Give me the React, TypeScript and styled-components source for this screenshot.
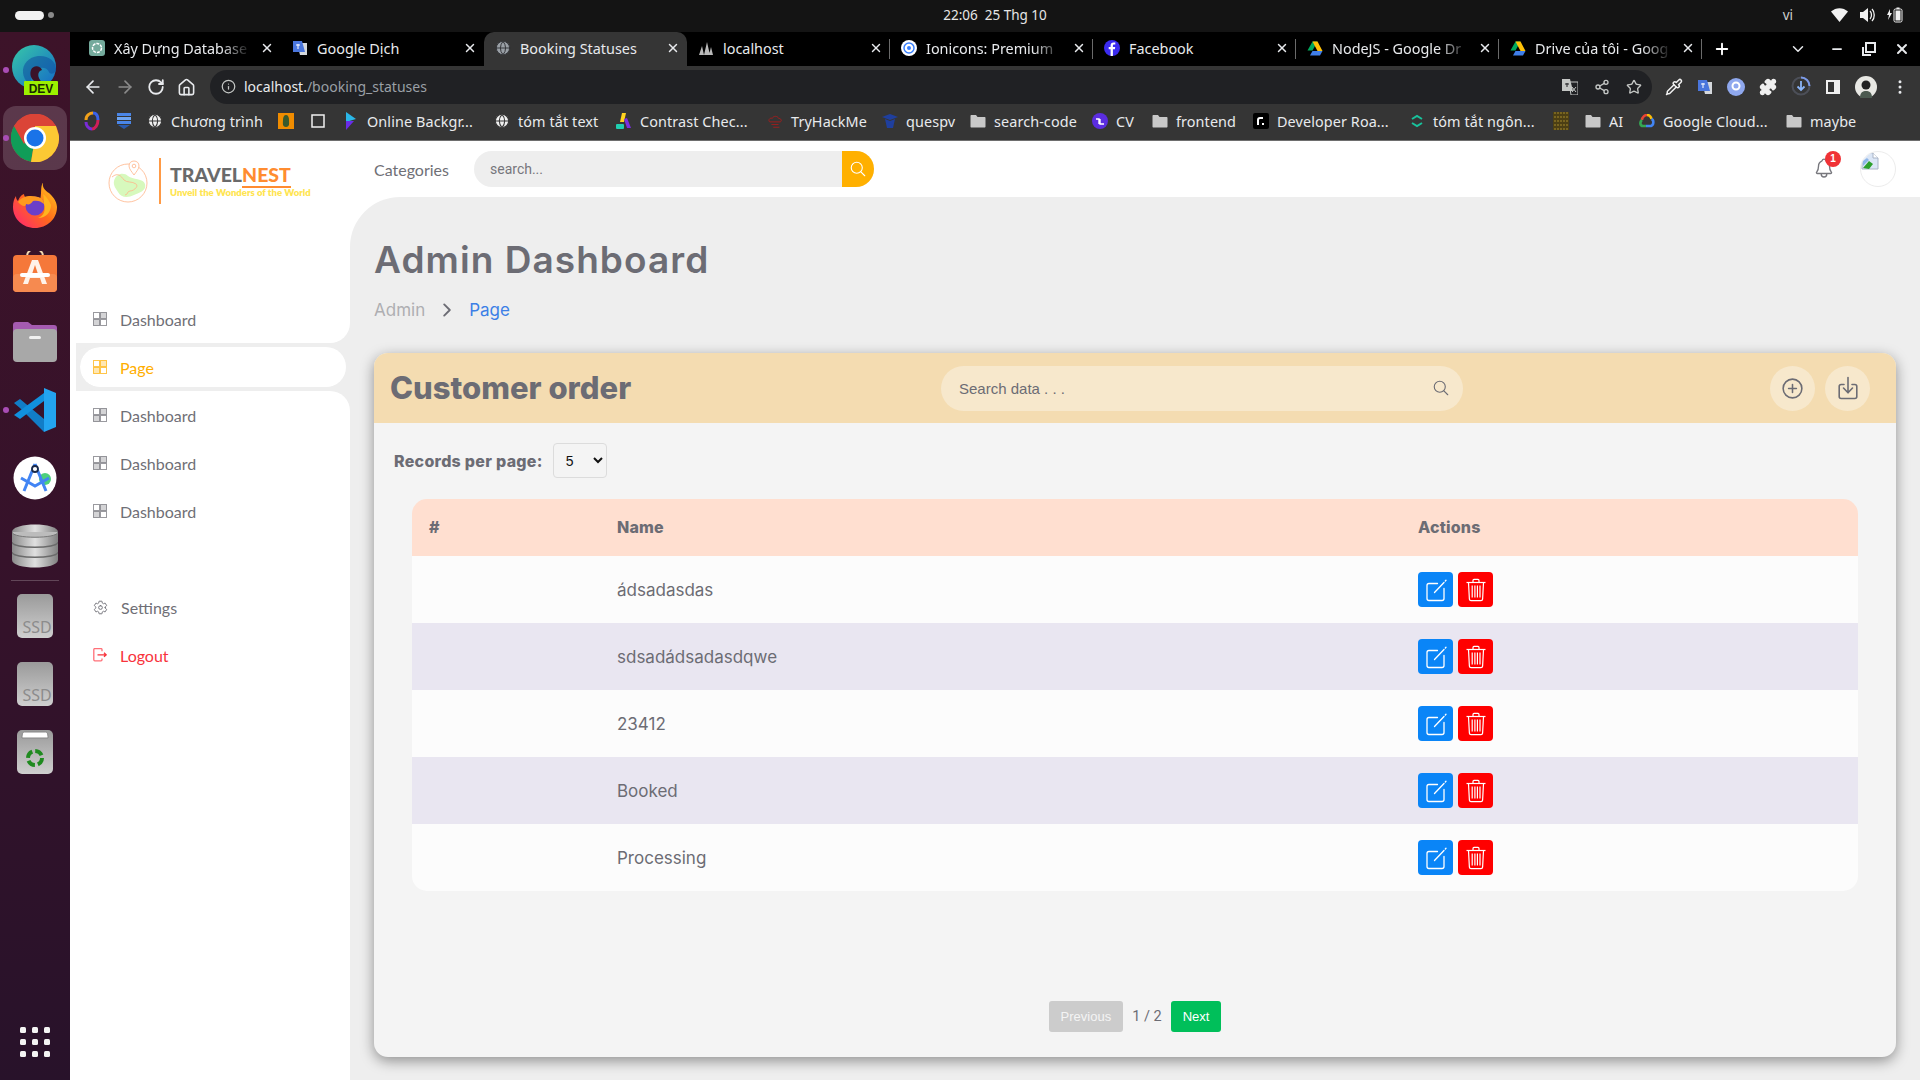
import React from "react";
import styled, { createGlobalStyle } from "styled-components";
import {
  ArrowLeft,
  ArrowRight,
  RotateCw,
  Home,
  Info,
  Share2,
  Star,
  Puzzle,
  Pipette,
  MoreVertical,
  X,
  Plus,
  ChevronDown,
  Minus,
  Globe,
} from "lucide-react";
import {
  IoAddCircleOutline,
  IoNotificationsOutline,
  IoSearchOutline,
  IoSettingsOutline,
  IoChevronForwardOutline,
} from "react-icons/io5";

const GlobalStyle = createGlobalStyle`
  html, body {
    margin: 0;
    padding: 0;
    height: 100%;
    overflow: hidden;
    background: #eeeeee;
  }
  * {
    box-sizing: border-box;
  }
`;

const Screen = styled.div`
  width: 1920px;
  height: 1080px;
  display: flex;
  flex-direction: column;
  overflow: hidden;
`;

/* ---------- ubuntu top bar ---------- */

const TopBar = styled.div`
  height: 32px;
  flex: none;
  background: #141414;
  color: #e6e6e6;
  display: grid;
  grid-template-columns: 1fr auto 1fr;
  align-items: center;
  padding: 0 15px 2px;
  font-family: "Noto Sans", sans-serif;
  font-size: 13.5px;
`;

const Workspaces = styled.div`
  display: flex;
  align-items: center;
  gap: 4px;
`;

const WorkspacePill = styled.span`
  width: 29px;
  height: 9px;
  border-radius: 5px;
  background: #f2f2f2;
`;

const WorkspaceDot = styled.span`
  width: 6px;
  height: 6px;
  border-radius: 50%;
  background: #8a8a8a;
`;

const Clock = styled.div`
  padding-left: 70px;
  white-space: pre;
`;

const Tray = styled.div`
  display: flex;
  align-items: center;
  justify-content: flex-end;
  gap: 12px;
  padding-right: 2px;
`;

const TrayLang = styled.span`
  margin-right: 26px;
  color: #cfcfcf;
`;

const Desktop = styled.div`
  flex: 1;
  display: flex;
  min-height: 0;
`;

/* ---------- dock ---------- */

const Dock = styled.div`
  width: 70px;
  flex: none;
  background: linear-gradient(180deg, #3d1329 0%, #36122a 50%, #28122a 100%);
  display: flex;
  flex-direction: column;
  padding-top: 4px;
`;

const DockSlot = styled.div<{ $active?: boolean; $running?: boolean }>`
  position: relative;
  height: 68px;
  flex: none;
  display: flex;
  align-items: center;
  justify-content: center;

  ${(p) =>
    p.$active &&
    `
    &::before {
      content: "";
      position: absolute;
      inset: 2px 3px;
      border-radius: 13px;
      background: rgba(255, 255, 255, 0.16);
    }
  `}

  ${(p) =>
    p.$running &&
    `
    &::after {
      content: "";
      position: absolute;
      left: 3px;
      top: 31px;
      width: 6px;
      height: 6px;
      border-radius: 50%;
      background: #a94db5;
    }
  `}

  svg {
    position: relative;
  }
`;

const DockRule = styled.div`
  height: 1px;
  margin: 0 11px 1px;
  background: rgba(255, 255, 255, 0.22);
`;

const DockApps = styled.div`
  display: grid;
  grid-template-columns: repeat(3, 6px);
  gap: 6px;
  justify-content: center;
  margin-top: auto;
  padding-bottom: 23px;

  span {
    width: 6px;
    height: 6px;
    border-radius: 1.5px;
    background: #f4f4f4;
  }
`;

/* ---------- chrome ---------- */

const Browser = styled.div`
  flex: 1;
  min-width: 0;
  display: flex;
  flex-direction: column;
`;

const TabStrip = styled.div`
  height: 34px;
  flex: none;
  background: #000;
  display: flex;
  align-items: stretch;
  padding-left: 8px;
  color: #e8eaed;
  font-family: "Noto Sans", sans-serif;
  font-size: 14.4px;
`;

const Tab = styled.div<{ $active?: boolean; $divider?: boolean }>`
  position: relative;
  width: 203px;
  flex: none;
  display: flex;
  align-items: center;
  gap: 9px;
  padding: 0 7px 2px 11px;
  border-radius: 10px 10px 0 0;
  background: ${(p) => (p.$active ? "#353535" : "transparent")};

  ${(p) =>
    p.$divider &&
    `
    &::after {
      content: "";
      position: absolute;
      right: 0;
      top: 7px;
      bottom: 7px;
      width: 1px;
      background: #6a6a6a;
    }
  `}

  svg {
    flex: none;
  }
`;

const TabTitle = styled.span<{ $fade?: boolean }>`
  flex: 1;
  min-width: 0;
  white-space: nowrap;
  ${(p) =>
    p.$fade &&
    `
    mask-image: linear-gradient(90deg, #000 78%, transparent 100%);
  `}
`;

const TabPlus = styled.div`
  width: 40px;
  display: flex;
  align-items: center;
  justify-content: center;
`;

const WindowControls = styled.div`
  margin-left: auto;
  display: flex;
  align-items: center;
  gap: 18px;
  padding-right: 10px;
`;

const TabListChevron = styled(ChevronDown)`
  margin-right: 5px;
`;

const Toolbar = styled.div`
  height: 38px;
  flex: none;
  background: #353535;
  display: flex;
  align-items: flex-end;
  color: #e8eaed;
`;

const NavButtons = styled.div`
  width: 140px;
  height: 34px;
  flex: none;
  display: flex;
  align-items: center;
  padding-left: 13px;
  gap: 12px;
`;

const Omnibox = styled.div`
  width: 1442px;
  height: 34px;
  flex: none;
  border-radius: 17px;
  background: #202124;
  display: flex;
  align-items: center;
  padding: 0 10px 1px 11px;
  font-family: "Noto Sans", sans-serif;
  font-size: 14px;
`;

const UrlHost = styled.span`
  margin-left: 8px;
  color: #e8eaed;
`;

const UrlPath = styled.span`
  color: #9aa0a6;
`;

const OmniIcons = styled.div`
  margin-left: auto;
  display: flex;
  align-items: center;
  gap: 16px;
`;

const ExtIcons = styled.div`
  height: 34px;
  display: flex;
  align-items: center;
  gap: 14px;
  padding-left: 13px;
`;

const BookmarkBar = styled.div`
  height: 37px;
  flex: none;
  background: #353535;
  border-bottom: 1px solid #6e6e6e;
  display: flex;
  align-items: center;
  padding: 0 0 2px 14px;
  color: #e8eaed;
  font-family: "Noto Sans", sans-serif;
  font-size: 14.4px;
  letter-spacing: 0.1px;
`;

const Bookmark = styled.div<{ $w: number }>`
  width: ${(p) => p.$w}px;
  flex: none;
  display: flex;
  align-items: center;
  gap: 8px;
  white-space: nowrap;

  svg {
    flex: none;
    min-width: 16px;
  }
`;

/* ---------- page ---------- */

const Page = styled.div`
  flex: 1;
  min-height: 0;
  display: flex;
`;

const Sidebar = styled.aside`
  width: 280px;
  flex: none;
  background: #eeeeee;
  display: flex;
  flex-direction: column;
  font-family: "Lato", sans-serif;
  font-size: 16px;
  color: #6f6f76;
`;

const SideTop = styled.div`
  height: 202px;
  flex: none;
  background: #fff;
  border-bottom-right-radius: 20px;
  display: flex;
  flex-direction: column;
  justify-content: space-between;
`;

const Logo = styled.div`
  display: flex;
  align-items: center;
  padding: 17px 0 0 38px;
`;

const LogoRule = styled.span`
  width: 2px;
  height: 46px;
  margin: 0 9px;
  background: #ff9a45;
`;

const LogoText = styled.div`
  display: flex;
  flex-direction: column;
  gap: 1px;
`;

const LogoName = styled.div`
  font-family: "Lato", sans-serif;
  font-size: 19.5px;
  line-height: 22px;
  font-weight: 900;
  color: #6a6a6a;

  span {
    color: #ff8c30;
    border-bottom: 2px solid #ff8c30;
  }
`;

const LogoTag = styled.div`
  font-family: "Lato", sans-serif;
  font-size: 9.5px;
  line-height: 12px;
  font-weight: 800;
  color: #ffe552;
  white-space: nowrap;
`;

const NavItem = styled.div<{ $tone?: "default" | "danger" }>`
  height: 48px;
  display: flex;
  align-items: center;
  gap: 13px;
  padding-left: 23px;
  color: ${(p) => (p.$tone === "danger" ? "#f8333c" : "inherit")};
`;

const ActiveRow = styled.div`
  height: 48px;
  flex: none;
  padding: 4px 4px 4px 10px;
  background: linear-gradient(90deg, #fff 6px, #eeeeee 6px);
`;

const ActivePill = styled.div`
  position: relative;
  height: 40px;
  display: flex;
  align-items: center;
  gap: 13px;
  padding-left: 13px;
  background: #fff;
  border-radius: 20px;
  color: #ffae00;

  &::before {
    content: "";
    position: absolute;
    inset: -4px 0 -4px -4px;
    z-index: 0;
    border: 4px solid #eeeeee;
    border-right: 0;
    border-radius: 24px 0 0 24px;
  }
`;

const SideBottom = styled.div`
  flex: 1;
  background: #fff;
  border-top-right-radius: 20px;
  display: flex;
  flex-direction: column;
`;

const NavGap = styled.div`
  height: 48px;
  flex: none;
`;

const Main = styled.div`
  flex: 1;
  min-width: 0;
  background: #fff;
  display: flex;
  flex-direction: column;
`;

const TopNav = styled.nav`
  height: 56px;
  flex: none;
  display: flex;
  align-items: flex-start;
  padding: 10px 24px 0;
`;

const Categories = styled.span`
  width: 100px;
  flex: none;
  line-height: 37px;
  font-family: "Lato", sans-serif;
  font-size: 16px;
  color: #6f6f76;
`;

const TopSearch = styled.div`
  width: 400px;
  height: 36px;
  flex: none;
  display: flex;
  border-radius: 18px;
  overflow: hidden;
  background: #eeeeee;
`;

const TopSearchText = styled.span`
  flex: 1;
  padding-left: 16px;
  line-height: 37px;
  font-family: "Roboto", sans-serif;
  font-size: 14px;
  color: #76767c;
`;

const TopSearchButton = styled.button`
  width: 32px;
  border: 0;
  padding: 0;
  background: #ffb000;
  color: #fff;
  display: flex;
  align-items: center;
  justify-content: center;
`;

const TopRight = styled.div`
  margin-left: auto;
  display: flex;
  align-items: flex-start;
  gap: 25px;
`;

const Bell = styled.div`
  position: relative;
  width: 22px;
  height: 26px;
  margin-top: 6px;
  color: #77777d;
`;

const BellBadge = styled.span`
  position: absolute;
  right: -6px;
  top: -6px;
  width: 16px;
  height: 16px;
  border-radius: 50%;
  background: #f03236;
  color: #fff;
  font-family: "Liberation Sans", sans-serif;
  font-size: 10px;
  font-weight: 700;
  line-height: 16px;
  text-align: center;
`;

const Avatar = styled.div`
  width: 36px;
  height: 36px;
  border-radius: 50%;
  border: 1px solid #ececec;
  overflow: hidden;
`;

const Content = styled.main`
  flex: 1;
  min-height: 0;
  background: #eeeeee;
  border-top-left-radius: 50px;
  display: flex;
  flex-direction: column;
  padding: 36px 24px 23px;
  color: #6c6c74;
  font-family: "Inter", sans-serif;
`;

const PageTitle = styled.h1`
  margin: 0;
  height: 54px;
  font-size: 37px;
  line-height: 54px;
  font-weight: 600;
  letter-spacing: 1.05px;
  color: #6c6c74;
`;

const Crumbs = styled.div`
  height: 24px;
  margin-top: 11px;
  display: flex;
  align-items: center;
  gap: 12px;
  font-size: 17px;
  color: #aeaeb2;
`;

const CrumbLink = styled.span`
  color: #3c7fe6;
`;

const Card = styled.section`
  flex: 1;
  min-height: 0;
  margin-top: 31px;
  border-radius: 14px;
  background: #f4f4f4;
  box-shadow: 0 4px 14px rgba(0, 0, 0, 0.4);
  display: flex;
  flex-direction: column;
  overflow: hidden;
`;

const CardHead = styled.header`
  height: 70px;
  flex: none;
  background: #f4dcb1;
  display: grid;
  grid-template-columns: 551px 522px 1fr;
  align-items: center;
  padding: 0 26px 0 16px;
`;

const CardTitle = styled.h2`
  margin: 0 0 2px;
  font-size: 31px;
  font-weight: 800;
  color: #6c6c74;
`;

const DataSearch = styled.div`
  height: 45px;
  border-radius: 23px;
  background: #f7e8cc;
  display: flex;
  align-items: center;
  justify-content: space-between;
  padding: 0 13px 0 18px;
  font-family: "Liberation Sans", sans-serif;
  font-size: 15px;
  color: #6c6c74;
`;

const HeadActions = styled.div`
  display: flex;
  justify-content: flex-end;
  gap: 10px;
`;

const RoundButton = styled.button`
  width: 45px;
  height: 45px;
  border: 0;
  padding: 0;
  border-radius: 50%;
  background: #f7e8cc;
  color: #6c6c74;
  display: flex;
  align-items: center;
  justify-content: center;
`;

const RecordsRow = styled.div`
  display: flex;
  align-items: center;
  gap: 10px;
  padding: 20px 0 0 20px;
  font-size: 16px;
  font-weight: 800;
  letter-spacing: 0.28px;
`;

const RecordsSelect = styled.select`
  width: 54px;
  height: 35px;
  padding-left: 8px;
  border: 1px solid #dcdcdc;
  border-radius: 4px;
  background: #f4f4f4;
  color: #111;
  font-family: "Liberation Sans", sans-serif;
  font-size: 14px;
`;

const TableWrap = styled.div`
  margin: 21px 38px 0;
  border-radius: 15px;
  overflow: hidden;
`;

const Table = styled.table`
  width: 100%;
  border-collapse: collapse;
  table-layout: fixed;
`;

const HeadCell = styled.th<{ $w?: number }>`
  height: 57px;
  padding: 0 0 2px 17px;
  background: #ffdfd0;
  text-align: left;
  font-size: 16px;
  font-weight: 800;
  letter-spacing: 0.2px;
  width: ${(p) => (p.$w ? `${p.$w}px` : "auto")};
`;

const Row = styled.tr<{ $even: boolean }>`
  background: ${(p) => (p.$even ? "#e9e6f1" : "#fcfcfc")};
`;

const Cell = styled.td`
  height: 67px;
  padding: 0 0 0 17px;
  font-size: 17px;
  font-weight: 400;
`;

const ActionCell = styled.div`
  display: flex;
  gap: 5px;
`;

const ActionButton = styled.button<{ $kind: "edit" | "delete" }>`
  width: 35px;
  height: 35px;
  border: 0;
  padding: 0;
  border-radius: 4px;
  background: ${(p) => (p.$kind === "edit" ? "#0a85f7" : "#ff0000")};
  color: #fff;
  display: flex;
  align-items: center;
  justify-content: center;
`;

const Pager = styled.div`
  margin-top: auto;
  height: 56px;
  flex: none;
  display: flex;
  justify-content: center;
  gap: 9px;
  font-family: "Roboto", sans-serif;
  font-size: 15px;
`;

const PagerButton = styled.button<{ $enabled?: boolean }>`
  height: 31px;
  border: 0;
  border-radius: 3px;
  padding: 0 12px;
  background: ${(p) => (p.$enabled ? "#00bf5a" : "#cccccc")};
  color: ${(p) => (p.$enabled ? "#fff" : "#f4f4f4")};
  font-family: "Liberation Sans", sans-serif;
  font-size: 13px;
`;

const PagerCount = styled.span`
  line-height: 31px;
  font-size: 14.5px;
`;

/* ---------- drawn icons ---------- */

const SideGrid = () => (
  <svg width="14" height="14" viewBox="0 0 14 14" fill="none" stroke="currentColor" strokeOpacity="0.7">
    <rect x="0.5" y="0.5" width="6" height="6" />
    <rect x="7.5" y="0.5" width="6" height="6" fill="currentColor" fillOpacity="0.3" />
    <rect x="0.5" y="7.5" width="6" height="6" fill="currentColor" fillOpacity="0.3" />
    <rect x="7.5" y="7.5" width="6" height="6" />
  </svg>
);

const LogoutIcon = () => (
  <svg width="14" height="14" viewBox="0 0 14 14" fill="none" stroke="#ff7078" strokeWidth="1.300">
    <path d="M9 3.200V1.600C9 1 8.600.6 8 .6H1.800C1.200.6.8 1 .8 1.600v10.200c0 .6.4 1 1 1H8c.6 0 1-.4 1-1v-1.400" />
    <path d="M4.500 6.800h8.600M11 4.800l2.200 2-2.200 2" stroke="#f8333c" />
  </svg>
);

const EditIcon = () => (
  <svg width="24" height="24" viewBox="0 1 24 24" fill="none" stroke="#fff" strokeWidth="1.300" strokeLinecap="round">
    <path d="M13.500 6.500H5c-1.200 0-2 .8-2 2v13c0 1.200.8 2 2 2h13c1.200 0 2-.8 2-2v-10" />
    <path d="M10.500 15.500L20 5.500" />
    <path d="M21.300 4l.7-.8" />
  </svg>
);

const TrashIcon = () => (
  <svg width="22" height="24" viewBox="0 0 22 24" fill="none" stroke="#fff" strokeWidth="1.200">
    <path d="M1.500 4.500h19" />
    <path d="M8 4.300V2.400c0-.6.4-1 1-1h4c.6 0 1 .4 1 1v1.900" />
    <path d="M3.500 4.700l.9 16.400c.1 1 .7 1.600 1.600 1.600h10c.9 0 1.500-.6 1.600-1.600l.9-16.400" />
    <path d="M7.200 7.500v12M9.900 7.500v12M12.400 7.500v12M15 7.500v12" />
  </svg>
);

const SaveInIcon = () => (
  <svg width="20" height="24" viewBox="0 0 20 24" fill="none" stroke="#6c6c74" strokeWidth="1.600" strokeLinecap="round" strokeLinejoin="round">
    <path d="M6 8.500H3.200C2 8.500 1.200 9.300 1.200 10.500v10c0 1.200.8 2 2 2h13.600c1.200 0 2-.8 2-2v-10c0-1.200-.8-2-2-2H14" />
    <path d="M10 1.500v15M5.500 12l4.500 4.800L14.500 12" />
  </svg>
);

const BrokenImage = () => (
  <svg width="18" height="18" viewBox="0 0 18 18">
    <path d="M1 1h11l5 5v11H1z" fill="#dbe6f6" stroke="#a9b4c6" strokeWidth="1" />
    <path d="M12 1v5h5" fill="#fff" stroke="#a9b4c6" strokeWidth="1" />
    <path d="M2 16l6-7 4 3-4 5z" fill="#2ca02c" />
    <path d="M2 9l4-3 2 2-6 6z" fill="#8fb6e8" />
  </svg>
);

const TranslatePage = () => (
  <svg width="16" height="16" viewBox="0 0 16 16">
    <path d="M7 3h9v13H9z" fill="#202124" stroke="#c4c7c5" />
    <path d="M0 0h8l3 12H0z" fill="#c4c7c5" />
    <path d="M3 5h4M5 4v4" stroke="#202124" strokeWidth="1" />
    <path d="M10 8l4 5M14 8l-4 5" stroke="#c4c7c5" strokeWidth="1" />
  </svg>
);

const LogoMark = () => (
  <svg width="42" height="44" viewBox="0 0 42 44" fill="none" stroke="#ffb488" strokeWidth="0.800">
    <path d="M6 22c2-8 10-9 14-5 5 4 15 2 17 8 2 7-7 9-11 11-6 3-13 3-16-3-2-3-5-7-4-11z" fill="#d7f9bd" stroke="none" />
    <circle cx="20" cy="24" r="19" />
    <path d="M4 18c6-5 9-1 12 3 3 3 8 1 12 4 3 2-2 7-6 7-3 0-2 4-5 4" />
    <path d="M26 2c3 0 5 2 5 5 0 3-3 6-5 9-2-3-5-6-5-9 0-3 2-5 5-5z" fill="#fff" />
    <circle cx="26" cy="7" r="1.800" />
  </svg>
);

const Favicon = ({ kind }: { kind: string }) => {
  switch (kind) {
    case "gpt":
      return (
        <svg width="16" height="16" viewBox="0 0 16 16">
          <rect width="16" height="16" rx="3" fill="#74aa9c" />
          <circle cx="8" cy="8" r="4.500" fill="none" stroke="#fff" strokeWidth="1.500" strokeDasharray="3 1" />
        </svg>
      );
    case "gtranslate":
      return (
        <svg width="16" height="16" viewBox="0 0 16 16">
          <path d="M5 3h10v12H8z" fill="#d5d8dc" />
          <path d="M1 1h9l3 11H1z" fill="#4a76dd" />
          <path d="M4 5h4M6 4v5" stroke="#fff" strokeWidth="1" />
        </svg>
      );
    case "sail":
      return (
        <svg width="16" height="16" viewBox="0 0 16 16" fill="#b9b9b9">
          <path d="M1 15L4 6l2 9zM6 15L9 2l3 13zM11 15l2-8 2 8z" />
        </svg>
      );
    case "ionic":
      return (
        <svg width="16" height="16" viewBox="0 0 16 16" fill="none">
          <circle cx="8" cy="8" r="8" fill="#fff" />
          <circle cx="8" cy="8" r="5" stroke="#3880ff" strokeWidth="1.500" />
          <circle cx="8" cy="8" r="2" fill="#3880ff" />
        </svg>
      );
    case "facebook":
      return (
        <svg width="16" height="16" viewBox="0 0 16 16">
          <circle cx="8" cy="8" r="8" fill="#3b2bf0" />
          <path d="M8.900 16V9.300h2l.3-2.300H8.900V5.600c0-.7.3-1.100 1.200-1.100h1.200v-2c-.4 0-1-.1-1.700-.1-1.900 0-3 1.100-3 3V7H4.700v2.300h1.900V16z" fill="#fff" />
        </svg>
      );
    case "drive":
      return (
        <svg width="16" height="15" viewBox="0 0 16 15">
          <path d="M5.500 0h5l-5 9H.5z" fill="#00a95c" transform="translate(0 .5)" />
          <path d="M10.500.5L15.500 10h-5L5.500.5z" fill="#ffc107" />
          <path d="M3 14.500L5.500 10h10L13 14.500z" fill="#3f7ee8" />
        </svg>
      );
    default:
      return <Globe size={16} color="#35363a" fill="#9aa0a6" strokeWidth={1.500} />;
  }
};

const FolderIcon = () => (
  <svg width="16" height="14" viewBox="0 0 16 14">
    <path d="M1.500 1h4.500l1.500 2h7c.6 0 1 .4 1 1v8.500c0 .6-.4 1-1 1h-13c-.6 0-1-.4-1-1V2c0-.6.4-1 1-1z" fill="#c8c8c8" />
  </svg>
);

const BookmarkIcon = ({ kind }: { kind: string }) => {
  switch (kind) {
    case "folder":
      return <FolderIcon />;
    case "globe":
      return <Globe size={16} color="#353535" fill="#f0f0f0" strokeWidth={1.600} />;
    case "swirl":
      return (
        <svg width="16" height="20" viewBox="0 0 16 20" fill="none" strokeWidth="3">
          <path d="M2 9C2 4 6 2 9 2" stroke="#f2a11a" />
          <path d="M9 2c4 0 5 4 5 7" stroke="#3b62e8" />
          <path d="M14 9c0 5-3 9-6 9" stroke="#d11f5a" />
          <path d="M8 18c-4 0-6-4-6-7" stroke="#7a2bd8" />
        </svg>
      );
    case "stack":
      return (
        <svg width="14" height="18" viewBox="0 0 14 18" fill="#4a86e8">
          <rect y="1" width="14" height="3" />
          <rect y="5" width="14" height="3" fill="#6ea5f2" />
          <rect y="9" width="14" height="3" />
          <path d="M1 13h12l-6 4z" fill="#2a5bb0" />
        </svg>
      );
    case "orange":
      return (
        <svg width="16" height="16" viewBox="0 0 16 16">
          <rect width="16" height="16" fill="#f08c00" />
          <path d="M8 2c2 0 3 2 3 5s1 7-3 7-3-4-3-7 1-5 3-5z" fill="#3a5a2c" />
        </svg>
      );
    case "square":
      return (
        <svg width="14" height="14" viewBox="0 0 14 14" fill="none">
          <rect x="1" y="1" width="12" height="12" stroke="#f0f0f0" strokeWidth="1.500" />
        </svg>
      );
    case "online":
      return (
        <svg width="14" height="20" viewBox="0 0 14 20">
          <path d="M2 1l10 7-10 3z" fill="#2ab7e8" />
          <path d="M2 10l8 0-8 9z" fill="#6a2ce8" />
        </svg>
      );
    case "contrast":
      return (
        <svg width="16" height="18" viewBox="0 0 16 18">
          <path d="M6 1h4L8 10H4z" fill="#ffd21f" />
          <path d="M8 7l3-1 4 10h-4z" fill="#7b2fe0" />
          <rect x="0" y="12" width="8" height="5" rx="1" fill="#1fcfb0" />
        </svg>
      );
    case "thm":
      return (
        <svg width="16" height="16" viewBox="0 0 18 18" fill="none" stroke="#a81c1c" strokeWidth="1">
          <path d="M3 10c-2-2 0-5 3-4 1-3 6-3 7 0 3 0 4 3 2 4z" />
          <path d="M5 13h8M7 16h7" />
        </svg>
      );
    case "ques":
      return (
        <svg width="16" height="16" viewBox="0 0 16 16" fill="#1f3f9e">
          <path d="M0 4l8-3 8 3-8 3z" />
          <path d="M3 6l5 2 5-2-2 9H5z" />
        </svg>
      );
    case "cv":
      return (
        <svg width="16" height="16" viewBox="0 0 16 16">
          <circle cx="8" cy="8" r="8" fill="#5b2de0" />
          <path d="M4 6h3v5M8 6v5h4" fill="none" stroke="#fff" strokeWidth="1.400" />
        </svg>
      );
    case "roadmap":
      return (
        <svg width="16" height="16" viewBox="0 0 16 16">
          <rect width="16" height="16" rx="2" fill="#000" />
          <path d="M5 12V7c0-1.500 1-2 2-2h3" fill="none" stroke="#fff" strokeWidth="2" />
          <rect x="9" y="10" width="2" height="2" fill="#fff" />
        </svg>
      );
    case "quillbot":
      return (
        <svg width="16" height="16" viewBox="0 0 16 16" fill="none" stroke="#18c29c" strokeWidth="2">
          <path d="M3 6l5-3 5 3M13 10l-5 3-5-3" />
        </svg>
      );
    case "book":
      return (
        <svg width="16" height="18" viewBox="0 0 16 18">
          <rect width="16" height="18" fill="#4c3f14" />
          <path d="M2 0v18M5 0v18M8 0v18M11 0v18M14 0v18" stroke="#a38a2c" strokeDasharray="2 2" />
        </svg>
      );
    case "cloud":
      return (
        <svg width="16" height="14" viewBox="0 0 16 14" fill="none" strokeWidth="2.600">
          <path d="M3 6c0-3 3-5 5-5" stroke="#ea4335" />
          <path d="M8 1c3 0 4 2 4.500 4" stroke="#fbbc05" />
          <path d="M12.500 5c2.500 1 2.500 6-.5 7H7" stroke="#4285f4" />
          <path d="M7 12H4C1 12 .5 8 3 6" stroke="#34a853" />
        </svg>
      );
    default:
      return null;
  }
};

const EdgeDev = () => (
  <svg width="50" height="50" viewBox="0 0 50 50">
    <defs>
      <linearGradient id="edgeA" x1="0" y1="0" x2="1" y2="1">
        <stop offset="0" stopColor="#37c8a8" />
        <stop offset="1" stopColor="#1468c8" />
      </linearGradient>
    </defs>
    <circle cx="24" cy="22" r="22" fill="url(#edgeA)" />
    <path d="M46 24c0-8-8-14-18-13-9 1-16 8-15 17 1 8 8 15 17 15-10-3-11-13-6-17 6-5 13-4 15 1 1 3 7 2 7-3z" fill="#0f4f9e" opacity="0.55" />
    <path d="M21 25c2-5 9-5 11 0-5 1-5 8 0 12 1 1 3 2 3 2-8 1-17-5-14-14z" fill="#3b1329" />
    <rect x="14" y="36" width="34" height="15" rx="1" fill="#9cf000" />
    <text x="31" y="47.500" textAnchor="middle" fontFamily="Liberation Sans, sans-serif" fontSize="12" fontWeight="700" fill="#1a2a00">DEV</text>
  </svg>
);

const ChromeIcon = () => (
  <svg width="48" height="48" viewBox="0 0 48 48">
    <circle cx="24" cy="24" r="24" fill="#db4437" />
    <path d="M24 24L3 12A24 24 0 0 0 20 47.700z" fill="#109d58" />
    <path d="M24 24l-4 24A24 24 0 0 0 47.800 21L45 12H24z" fill="#fcc934" />
    <path d="M24 12h21A24 24 0 0 0 3 12l10 18z" fill="#db4437" />
    <circle cx="24" cy="24" r="11" fill="#fff" />
    <circle cx="24" cy="24" r="8.500" fill="#1a73e8" />
  </svg>
);

const FirefoxIcon = () => (
  <svg width="44" height="46" viewBox="0 1 44 46">
    <defs>
      <linearGradient id="foxA" x1="0" y1="1" x2="1" y2="0">
        <stop offset="0" stopColor="#ff1f7a" />
        <stop offset="0.5" stopColor="#ff6a1a" />
        <stop offset="1" stopColor="#ffd51f" />
      </linearGradient>
    </defs>
    <path d="M30 0c-1 6 2 8 6 11 6 5 8 11 8 14 0 12-10 21-22 21S0 37 0 25c0-5 1-8 3-11 0 3 1 4 2 5 1-3 3-6 6-7 0 2 1 3 3 4 4-1 10-1 13 2 2-7 0-12 3-18z" fill="url(#foxA)" />
    <circle cx="22" cy="24" r="9.500" fill="#6b3fc8" />
    <path d="M5 20c4-6 12-7 20-5 4 1 6 4 6 7-3-3-7-4-11-3-2 3-4 4-7 3 0 3-4 3-8-2z" fill="#ff9a1f" />
    <path d="M31 22c2 6 0 12-6 14 8 0 13-6 13-13-2-5-5-9-8-11 1 4 1 7 1 10z" fill="#ffb41f" />
  </svg>
);

const SoftwareIcon = () => (
  <svg width="46" height="46" viewBox="0 3 46 46">
    <path d="M15 8c0-9 16-9 16 0" fill="none" stroke="#f3d9b0" strokeWidth="2" />
    <rect x="1" y="7" width="44" height="37" rx="4" fill="#f5783a" />
    <rect x="1" y="26" width="44" height="18" rx="4" fill="#f68a50" />
    <path d="M20 12h6l9 24h-5l-2-6H18l-2 6h-5zM23 17l-3 9h6z" fill="#fff3ea" fillRule="evenodd" />
    <rect x="8" y="25" width="30" height="4" rx="2" fill="#fff" />
  </svg>
);

const FilesIcon = () => (
  <svg width="46" height="44" viewBox="0 0 46 44">
    <path d="M1 5c0-2 1-3 3-3h12l4 3h22c2 0 3 1 3 3v10H1z" fill="#a55bb0" />
    <rect x="1" y="9" width="44" height="33" rx="4" fill="#a8a8a8" />
    <rect x="17" y="16" width="12" height="3" rx="1.500" fill="#f0f0f0" />
  </svg>
);

const VsCodeIcon = () => (
  <svg width="44" height="44" viewBox="0 0 44 44">
    <path d="M31 0l12 5v34l-12 5V0z" fill="#23a4f0" />
    <path d="M31 31v13L7 20l-6-5 6-4z" fill="#0d8ad8" opacity="0.9" />
    <path d="M1 27l30-22v8L7 31z" fill="#1190de" />
  </svg>
);

const AndroidStudioIcon = () => (
  <svg width="44" height="44" viewBox="0 0 44 44">
    <circle cx="22" cy="22" r="21.500" fill="#fff" />
    <circle cx="32" cy="23" r="6" fill="#4cd07d" />
    <path d="M22 8L11 35M22 8l11 27M8 22l14 8 14-8" fill="none" stroke="#4285f4" strokeWidth="3" />
    <circle cx="22" cy="13" r="3" fill="#fff" stroke="#1a2a4a" strokeWidth="1.800" />
  </svg>
);

const DatabaseIcon = () => (
  <svg width="46" height="44" viewBox="0 0 46 44">
    <defs>
      <linearGradient id="dbA" x1="0" y1="0" x2="1" y2="0">
        <stop offset="0" stopColor="#8a8a8a" />
        <stop offset="0.5" stopColor="#e0e0e0" />
        <stop offset="1" stopColor="#808080" />
      </linearGradient>
    </defs>
    <path d="M0 8c0-10 46-10 46 0v28c0 10-46 10-46 0z" fill="url(#dbA)" />
    <path d="M0 8c0 7 46 7 46 0" fill="#bcbcbc" stroke="#777" />
    <path d="M0 18c0 7 46 7 46 0M0 28c0 7 46 7 46 0" fill="none" stroke="#6a6a6a" strokeWidth="1.500" />
  </svg>
);

const DriveTile = ({ label }: { label: boolean }) => (
  <svg width="36" height="44" viewBox="0 0 36 44">
    <defs>
      <linearGradient id="tileA" x1="0" y1="0" x2="0" y2="1">
        <stop offset="0" stopColor="#9a9a9a" />
        <stop offset="1" stopColor="#cfcfcf" />
      </linearGradient>
    </defs>
    <rect width="36" height="44" rx="5" fill="url(#tileA)" />
    {label ? (
      <text x="20" y="39" textAnchor="middle" fontFamily="Noto Sans, sans-serif" fontSize="16" fill="#8c8c8c">SSD</text>
    ) : (
      <g>
        <path d="M5 8c0-5 1-6 3-6h20c2 0 3 1 3 6z" fill="#fff" stroke="#888" />
        <circle cx="18" cy="28" r="7" fill="none" stroke="#1f8a1f" strokeWidth="4" strokeDasharray="8 3" />
      </g>
    )}
  </svg>
);

/* ---------- data ---------- */

const tabs = [
  { title: "Xây Dựng Database", icon: "gpt", fade: true },
  { title: "Google Dịch", icon: "gtranslate" },
  { title: "Booking Statuses", icon: "globe", active: true },
  { title: "localhost", icon: "sail", divider: true },
  { title: "Ionicons: Premium", icon: "ionic", fade: true, divider: true },
  { title: "Facebook", icon: "facebook", divider: true },
  { title: "NodeJS - Google Dr", icon: "drive", fade: true, divider: true },
  { title: "Drive của tôi - Goog", icon: "drive", fade: true, divider: true },
];

const bookmarks = [
  { w: 32, icon: "swirl" },
  { w: 31, icon: "stack" },
  { w: 131, icon: "globe", label: "Chương trình" },
  { w: 32, icon: "orange" },
  { w: 33, icon: "square" },
  { w: 151, icon: "online", label: "Online Backgr..." },
  { w: 122, icon: "globe", label: "tóm tắt text" },
  { w: 151, icon: "contrast", label: "Contrast Chec..." },
  { w: 115, icon: "thm", label: "TryHackMe" },
  { w: 88, icon: "ques", label: "quespv" },
  { w: 122, icon: "folder", label: "search-code" },
  { w: 60, icon: "cv", label: "CV" },
  { w: 101, icon: "folder", label: "frontend" },
  { w: 156, icon: "roadmap", label: "Developer Roa..." },
  { w: 144, icon: "quillbot", label: "tóm tắt ngôn..." },
  { w: 32, icon: "book" },
  { w: 54, icon: "folder", label: "AI" },
  { w: 147, icon: "cloud", label: "Google Cloud..." },
  { w: 70, icon: "folder", label: "maybe" },
];

const rows = ["ádsadasdas", "sdsadádsadasdqwe", "23412", "Booked", "Processing"];

const App: React.FC = () => {
  return (
    <Screen>
      <GlobalStyle />
      <TopBar>
        <Workspaces>
          <WorkspacePill />
          <WorkspaceDot />
        </Workspaces>
        <Clock>22:06  25 Thg 10</Clock>
        <Tray>
          <TrayLang>vi</TrayLang>
          <svg width="17" height="14" viewBox="0 0 17 14" fill="#f2f2f2">
            <path d="M0 3.500C5-1 12-1 17 3.500L8.500 14z" />
          </svg>
          <svg width="15" height="14" viewBox="0 0 15 14" fill="#f2f2f2">
            <path d="M0 4h3l5-4v14l-5-4H0z" />
            <path d="M10 3c2 2 2 6 0 8M12 1c3 3 3 9 0 12" fill="none" stroke="#f2f2f2" strokeWidth="1.300" />
          </svg>
          <svg width="16" height="16" viewBox="0 0 16 16" fill="#f2f2f2">
            <path d="M3 2L0 8h2l-1 5 4-7H3z" />
            <rect x="7" y="2" width="8" height="13" rx="1.500" fill="none" stroke="#f2f2f2" />
            <rect x="8.500" y="3.500" width="5" height="10" />
            <rect x="9.500" y="0.500" width="3" height="1.500" />
          </svg>
        </Tray>
      </TopBar>
      <Desktop>
        <Dock>
          <DockSlot $running><EdgeDev /></DockSlot>
          <DockSlot $active $running><ChromeIcon /></DockSlot>
          <DockSlot><FirefoxIcon /></DockSlot>
          <DockSlot><SoftwareIcon /></DockSlot>
          <DockSlot><FilesIcon /></DockSlot>
          <DockSlot $running><VsCodeIcon /></DockSlot>
          <DockSlot><AndroidStudioIcon /></DockSlot>
          <DockSlot><DatabaseIcon /></DockSlot>
          <DockRule />
          <DockSlot><DriveTile label /></DockSlot>
          <DockSlot><DriveTile label /></DockSlot>
          <DockSlot><DriveTile label={false} /></DockSlot>
          <DockApps>
            {Array.from({ length: 9 }).map((_, i) => (
              <span key={i} />
            ))}
          </DockApps>
        </Dock>
        <Browser>
          <TabStrip>
            {tabs.map((tab) => (
              <Tab key={tab.title} $active={tab.active} $divider={tab.divider}>
                <Favicon kind={tab.icon} />
                <TabTitle $fade={tab.fade}>{tab.title}</TabTitle>
                <X size={14} strokeWidth={2.500} color="#e8eaed" />
              </Tab>
            ))}
            <TabPlus>
              <Plus size={18} strokeWidth={2.500} color="#fff" />
            </TabPlus>
            <WindowControls>
              <TabListChevron size={18} color="#e8eaed" />
              <Minus size={14} strokeWidth={3} color="#e8eaed" />
              <svg width="14" height="14" viewBox="0 0 14 14" fill="none" stroke="#e8eaed" strokeWidth="2">
                <rect x="4" y="1" width="9" height="9" />
                <path d="M1 5v8h8" />
              </svg>
              <X size={16} strokeWidth={3} color="#e8eaed" />
            </WindowControls>
          </TabStrip>
          <Toolbar>
            <NavButtons>
              <ArrowLeft size={20} color="#e8eaed" />
              <ArrowRight size={20} color="#8a8a8a" />
              <RotateCw size={18} color="#e8eaed" strokeWidth={2.400} />
              <Home size={19} color="#e8eaed" />
            </NavButtons>
            <Omnibox>
              <Info size={15} color="#c4c7c5" />
              <UrlHost>localhost.</UrlHost>
              <UrlPath>/booking_statuses</UrlPath>
              <OmniIcons>
                <TranslatePage />
                <Share2 size={16} color="#c4c7c5" />
                <Star size={16} color="#c4c7c5" />
              </OmniIcons>
            </Omnibox>
            <ExtIcons>
              <Pipette size={18} color="#f0f0f0" />
              <Favicon kind="gtranslate" />
              <svg width="18" height="18" viewBox="0 0 18 18">
                <circle cx="9" cy="9" r="9" fill="#8fa8ee" />
                <circle cx="9" cy="8" r="3.500" fill="none" stroke="#fff" strokeWidth="2" />
              </svg>
              <Puzzle size={18} color="#f0f0f0" fill="#f0f0f0" />
              <svg width="20" height="22" viewBox="0 0 20 22" fill="none">
                <circle cx="10" cy="10" r="8.500" stroke="#4c4f58" strokeWidth="2" />
                <path d="M10 1.500a8.500 8.500 0 0 1 8.500 8.500" stroke="#7c9ae8" strokeWidth="2" />
                <path d="M10 5v9M6.500 10.500L10 14l3.500-3.500" stroke="#8ab4f8" strokeWidth="1.800" />
              </svg>
              <svg width="16" height="16" viewBox="0 0 16 16">
                <path d="M1 1h14v14H1z" fill="#f0f0f0" />
                <rect x="3" y="3" width="6" height="10" fill="#353535" />
              </svg>
              <svg width="22" height="22" viewBox="0 0 22 22">
                <circle cx="11" cy="11" r="11" fill="#e8e8e4" />
                <circle cx="11" cy="9" r="4.500" fill="#222" />
                <path d="M5 22c0-6 3-7 6-7s6 1 6 7z" fill="#4c5a50" />
              </svg>
              <MoreVertical size={18} color="#e8eaed" />
            </ExtIcons>
          </Toolbar>
          <BookmarkBar>
            {bookmarks.map((b, i) => (
              <Bookmark key={i} $w={b.w}>
                <BookmarkIcon kind={b.icon} />
                {b.label}
              </Bookmark>
            ))}
          </BookmarkBar>
          <Page>
            <Sidebar>
              <SideTop>
                <Logo>
                  <LogoMark />
                  <LogoRule />
                  <LogoText>
                    <LogoName>
                      TRAVEL<span>NEST</span>
                    </LogoName>
                    <LogoTag>Unveil the Wonders of the World</LogoTag>
                  </LogoText>
                </Logo>
                <NavItem>
                  <SideGrid />
                  Dashboard
                </NavItem>
              </SideTop>
              <ActiveRow>
                <ActivePill>
                  <SideGrid />
                  Page
                </ActivePill>
              </ActiveRow>
              <SideBottom>
                <NavItem>
                  <SideGrid />
                  Dashboard
                </NavItem>
                <NavItem>
                  <SideGrid />
                  Dashboard
                </NavItem>
                <NavItem>
                  <SideGrid />
                  Dashboard
                </NavItem>
                <NavGap />
                <NavItem>
                  <IoSettingsOutline size={15} />
                  Settings
                </NavItem>
                <NavItem $tone="danger">
                  <LogoutIcon />
                  Logout
                </NavItem>
              </SideBottom>
            </Sidebar>
            <Main>
              <TopNav>
                <Categories>Categories</Categories>
                <TopSearch>
                  <TopSearchText>search...</TopSearchText>
                  <TopSearchButton>
                    <IoSearchOutline size={18} />
                  </TopSearchButton>
                </TopSearch>
                <TopRight>
                  <Bell>
                    <IoNotificationsOutline size={22} />
                    <BellBadge>1</BellBadge>
                  </Bell>
                  <Avatar>
                    <BrokenImage />
                  </Avatar>
                </TopRight>
              </TopNav>
              <Content>
                <PageTitle>Admin Dashboard</PageTitle>
                <Crumbs>
                  <span>Admin</span>
                  <IoChevronForwardOutline size={20} color="#6c6c74" />
                  <CrumbLink>Page</CrumbLink>
                </Crumbs>
                <Card>
                  <CardHead>
                    <CardTitle>Customer order</CardTitle>
                    <DataSearch>
                      Search data . . .
                      <IoSearchOutline size={18} />
                    </DataSearch>
                    <HeadActions>
                      <RoundButton>
                        <IoAddCircleOutline size={25} />
                      </RoundButton>
                      <RoundButton>
                        <SaveInIcon />
                      </RoundButton>
                    </HeadActions>
                  </CardHead>
                  <RecordsRow>
                    Records per page:
                    <RecordsSelect defaultValue="5">
                      <option value="5">5</option>
                      <option value="10">10</option>
                    </RecordsSelect>
                  </RecordsRow>
                  <TableWrap>
                    <Table>
                      <thead>
                        <tr>
                          <HeadCell $w={188}>#</HeadCell>
                          <HeadCell $w={801}>Name</HeadCell>
                          <HeadCell>Actions</HeadCell>
                        </tr>
                      </thead>
                      <tbody>
                        {rows.map((name, i) => (
                          <Row key={name} $even={i % 2 === 1}>
                            <Cell />
                            <Cell>{name}</Cell>
                            <Cell>
                              <ActionCell>
                                <ActionButton $kind="edit">
                                  <EditIcon />
                                </ActionButton>
                                <ActionButton $kind="delete">
                                  <TrashIcon />
                                </ActionButton>
                              </ActionCell>
                            </Cell>
                          </Row>
                        ))}
                      </tbody>
                    </Table>
                  </TableWrap>
                  <Pager>
                    <PagerButton>Previous</PagerButton>
                    <PagerCount>1 / 2</PagerCount>
                    <PagerButton $enabled>Next</PagerButton>
                  </Pager>
                </Card>
              </Content>
            </Main>
          </Page>
        </Browser>
      </Desktop>
    </Screen>
  );
};

export default App;
